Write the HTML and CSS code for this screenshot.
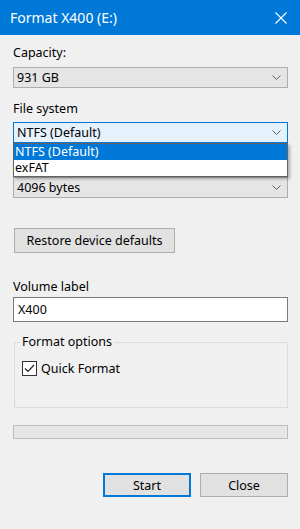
FILE: index.html
```html
<!DOCTYPE html>
<html>
<head>
<meta charset="utf-8">
<link rel="stylesheet" href="styles.css">
</head>
<body>
<div class="dialog">
  <div class="titlebar">
    <span class="title">Format X400 (E:)</span>
    <svg class="close" width="12" height="12" viewBox="0 0 12 12"><path d="M0.5 0.5 L11.5 11.5 M11.5 0.5 L0.5 11.5" stroke="#fff" stroke-width="1.1" fill="none"/></svg>
  </div>
  <div class="content">
    <div class="label">Capacity:</div>
    <div class="combo">
      <span>931 GB</span>
      <svg class="chev" width="9" height="5" viewBox="0 0 9 5"><path d="M0.5 0.5 L4.5 4.5 L8.5 0.5" stroke="#606060" fill="none"/></svg>
    </div>

    <div class="label gap">File system</div>
    <div class="combo-wrap">
      <div class="combo focused">
        <span>NTFS (Default)</span>
        <svg class="chev" width="9" height="5" viewBox="0 0 9 5"><path d="M0.5 0.5 L4.5 4.5 L8.5 0.5" stroke="#606060" fill="none"/></svg>
      </div>
      <div class="dropdown">
        <div class="item selected">NTFS (Default)</div>
        <div class="item">exFAT</div>
      </div>
    </div>

    <div class="label gap" aria-hidden="true"></div>
    <div class="combo">
      <span>4096 bytes</span>
      <svg class="chev" width="9" height="5" viewBox="0 0 9 5"><path d="M0.5 0.5 L4.5 4.5 L8.5 0.5" stroke="#606060" fill="none"/></svg>
    </div>

    <div class="btn restore">Restore device defaults</div>

    <div class="label vol">Volume label</div>
    <div class="input">X400</div>

    <fieldset class="group">
      <legend>Format options</legend>
      <div class="check-row">
        <span class="checkbox">
          <svg width="13" height="13" viewBox="0 0 13 13"><path d="M2 6.5 L5 9.5 L11 3" stroke="#222" stroke-width="1.2" fill="none"/></svg>
        </span>
        <span>Quick Format</span>
      </div>
    </fieldset>

    <div class="progress"></div>

    <div class="actions">
      <div class="btn action default">Start</div>
      <div class="btn action">Close</div>
    </div>
  </div>
</div>
</body>
</html>
```
FILE: styles.css
```css
html, body {
  margin: 0;
  padding: 0;
}
body {
  width: 300px;
  height: 529px;
  background: #f0f0f0;
  font-family: "Noto Sans", "Liberation Sans", sans-serif;
  font-size: 12.5px;
  color: #000;
  overflow: hidden;
}
.dialog {
  width: 300px;
  height: 529px;
  background: #f0f0f0;
}
.titlebar {
  height: 35px;
  background: #0078d7;
  display: flex;
  align-items: center;
  justify-content: space-between;
  padding: 0 13px 0 10px;
  box-sizing: border-box;
}
.title {
  color: #fff;
  font-size: 14px;
  margin-top: -1px;
}
.close {
  display: block;
}
.content {
  padding: 10px 12px 0 13px;
  display: flex;
  flex-direction: column;
}
.label {
  height: 16px;
  line-height: 16px;
  margin-bottom: 6px;
}
.label.gap {
  margin-top: 13px;
  margin-bottom: 5px;
}
.combo {
  height: 21px;
  box-sizing: border-box;
  border: 1px solid #adadad;
  background: #e5e5e5;
  display: flex;
  align-items: center;
  justify-content: space-between;
  padding: 0 6px 0 3px;
}
.combo.focused {
  background: #e5f1fb;
  border-color: #0078d7;
}
.chev {
  display: block;
}
.combo-wrap {
  position: relative;
}
.dropdown {
  position: absolute;
  left: 0;
  right: 0;
  top: 21px;
  z-index: 2;
  background: #fff;
  border: 1px solid #646464;
  box-shadow: 2px 2px 3px rgba(0, 0, 0, 0.28);
  box-sizing: border-box;
}
.item {
  height: 16px;
  line-height: 16px;
  padding-left: 1px;
}
.item.selected {
  background: #0078d7;
  color: #fff;
}
.btn {
  background: #e1e1e1;
  border: 1px solid #adadad;
  box-sizing: border-box;
  display: flex;
  align-items: center;
  justify-content: center;
}
.restore {
  margin-top: 30px;
  margin-left: 1px;
  width: 161px;
  height: 25px;
}
.label.vol {
  margin-top: 26px;
  margin-bottom: 2px;
}
.input {
  height: 25px;
  box-sizing: border-box;
  border: 1px solid #7a7a7a;
  background: #fff;
  display: flex;
  align-items: center;
  padding-left: 4px;
}
.group {
  margin: 12px 0 0 1px;
  padding: 0;
  border: 1px solid #dcdcdc;
  height: 74px;
  box-sizing: border-box;
  min-width: 0;
}
.group legend {
  padding: 0 2px;
  margin-left: 5px;
  line-height: 16px;
  height: 16px;
}
.check-row {
  display: flex;
  align-items: center;
  gap: 4px;
  margin: 10px 0 0 7px;
}
.checkbox {
  width: 15px;
  height: 15px;
  box-sizing: border-box;
  border: 1px solid #333;
  background: #fff;
  display: flex;
  align-items: center;
  justify-content: center;
}
.checkbox svg {
  display: block;
}
.progress {
  margin-top: 17px;
  height: 14px;
  box-sizing: border-box;
  border: 1px solid #bcbcbc;
  background: #e6e6e6;
}
.actions {
  margin-top: 34px;
  display: flex;
  justify-content: flex-end;
  gap: 9px;
}
.action {
  width: 88px;
  height: 24px;
}
.action.default {
  border: 2px solid #0078d7;
}
```
